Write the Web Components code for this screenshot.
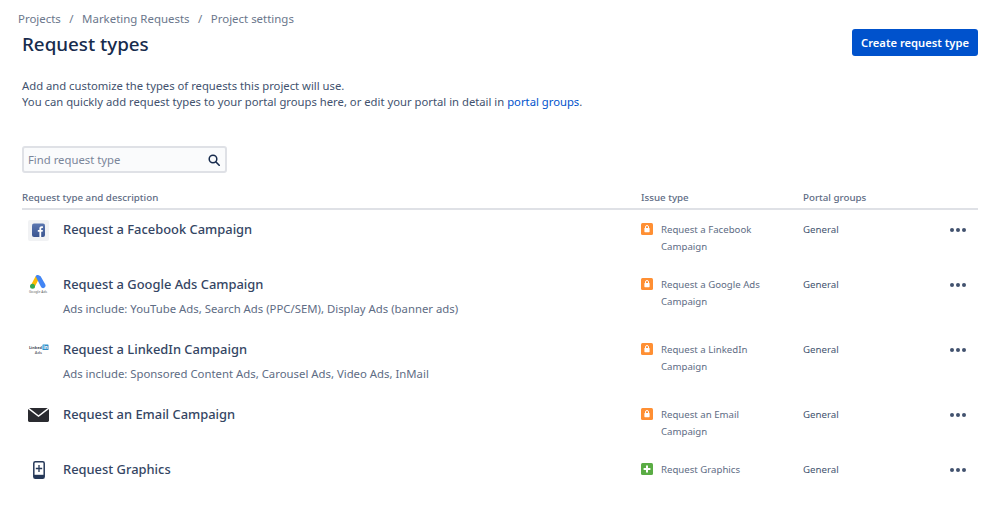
<!DOCTYPE html>
<html>
<head>
<meta charset="utf-8">
<title>Request types</title>
<style>
  html, body { margin: 0; background: #fff; }
  body { font-family: "Noto Sans", "Open Sans", sans-serif; color: #172b4d; }
</style>
</head>
<body>
<settings-page>
  <page-header></page-header>
  <request-table>
    <request-row name="Request a Facebook Campaign" issue="Request a Facebook Campaign" icon="facebook"></request-row>
    <request-row name="Request a Google Ads Campaign" issue="Request a Google Ads Campaign" icon="google" desc="Ads include: YouTube Ads, Search Ads (PPC/SEM), Display Ads (banner ads)"></request-row>
    <request-row name="Request a LinkedIn Campaign" issue="Request a LinkedIn Campaign" icon="linkedin" desc="Ads include: Sponsored Content Ads, Carousel Ads, Video Ads, InMail"></request-row>
    <request-row name="Request an Email Campaign" issue="Request an Email Campaign" icon="email"></request-row>
    <request-row name="Request Graphics" issue="Request Graphics" icon="graphics" kind="plus"></request-row>
  </request-table>
</settings-page>

<script>
// every icon is drawn in the same 21x22 box, centred on the row's first line
const ICONS = {
  facebook: `
    <svg width="21" height="21" viewBox="0 0 21 21">
      <defs><linearGradient id="fb" x1="0" y1="0" x2="0" y2="1"><stop offset="0" stop-color="#5a76b0"/><stop offset="1" stop-color="#3b5590"/></linearGradient></defs>
      <rect width="21" height="21" rx="2" fill="#f1f2f4"/>
      <rect x="4" y="3.5" width="13" height="13.5" rx="2" fill="url(#fb)"/>
      <path d="M11.4 17v-5.2H9.8V9.9h1.6V8.6c0-1.6.9-2.4 2.3-2.4h1.2v1.8h-.8c-.7 0-.9.4-.9 1v.9h1.7l-.3 1.9h-1.4V17z" fill="#fff"/>
    </svg>`,
  google: `
    <svg width="21" height="22" viewBox="0 0 21 22">
      <path d="M7.6 2.2 2.4 12.2l3.6 2 5.1-9.6z" fill="#fbbc04"/>
      <path d="M10.6 1.2c-1.4-.3-2.5.3-3 1l5.2 10.4c.8 1.5 2.3 1.9 3.5 1.2 1.3-.7 1.6-2.2.9-3.5l-4.6-8C12.1 1.7 11.5 1.4 10.6 1.2z" fill="#4285f4"/>
      <circle cx="4.5" cy="12.2" r="2.5" fill="#34a853"/>
      <text x="10" y="18.8" text-anchor="middle" font-family="Noto Sans, sans-serif" font-size="3.4" fill="#5f6368">Google Ads</text>
    </svg>`,
  linkedin: `
    <svg width="21" height="22" viewBox="0 0 21 22">
      <text x="14" y="10" text-anchor="end" font-family="Noto Sans, sans-serif" font-size="3.9" font-weight="700" fill="#444b57">Linked</text>
      <rect x="14.5" y="5.5" width="6" height="5.5" rx=".6" fill="#2d8fc9"/>
      <text x="17.5" y="10.2" text-anchor="middle" font-family="Noto Sans, sans-serif" font-size="4.6" font-weight="700" fill="#fff">in</text>
      <text x="14" y="15.4" text-anchor="end" font-family="Noto Sans, sans-serif" font-size="4" font-weight="600" fill="#6b6f78">Ads</text>
    </svg>`,
  email: `
    <svg width="21" height="14" viewBox="0 0 21 14">
      <path d="M1.2 0h18.600L10.5 7.3z" fill="#2a2b30"/>
      <path d="M0 1v11.600C0 13.400.6 14 1.400 14h18.200c.8 0 1.400-.6 1.400-1.400V1L10.500 9.100z" fill="#2a2b30"/>
    </svg>`,
  graphics: `
    <svg width="12" height="18" viewBox="0 0 12 18">
      <rect x=".8" y=".8" width="10.400" height="16.400" rx="1.500" fill="none" stroke="#253858" stroke-width="1.500"/>
      <rect x="1" y="13.800" width="10" height="3.200" fill="#253858"/>
      <path d="M6 4v7M2.800 7.500h6.400" stroke="#253858" stroke-width="1.300"/>
    </svg>`,
}

class SettingsPage extends HTMLElement {
  constructor() {
    super()
    this.attachShadow({ mode: "open" }).innerHTML = `
      <style>
        :host { display: block; padding: 11px 21px 0 22px; }
      </style>
      <slot></slot>`
  }
}

class PageHeader extends HTMLElement {
  constructor() {
    super()
    this.attachShadow({ mode: "open" }).innerHTML = `
      <style>
        :host { display: block; }
        .crumbs { display: flex; gap: 8.5px; margin-left: -4px; font-size: 11.45px; line-height: 15px; color: #6b778c; }
        .top { display: flex; justify-content: space-between; align-items: flex-start; }
        h1 { margin: 2px 0 0; font-size: 18.8px; line-height: 32px; font-weight: 500; color: #172b4d; }
        button { margin-top: 3px; width: 126px; height: 27px; padding: 0; border: 0; border-radius: 3px; background: #0052cc; color: #fff;
                 font: 600 11.2px "Noto Sans", sans-serif; }
        p { margin: 18px 0 0; font-size: 11.28px; line-height: 16px; color: #42526e; }
        a { color: #0052cc; text-decoration: none; }
        .search { box-sizing: border-box; margin-top: 36px; width: 205px; height: 27px; display: flex; align-items: center;
                  justify-content: space-between; padding: 0 5px 0 4px; border: 2px solid #dfe1e6; border-radius: 3px; background: #fafbfc;
                  font-size: 11.3px; color: #7a869a; }
      </style>
      <div class="crumbs"><span>Projects</span><span>/</span><span>Marketing Requests</span><span>/</span><span>Project settings</span></div>
      <div class="top">
        <h1>Request types</h1>
        <button>Create request type</button>
      </div>
      <p>Add and customize the types of requests this project will use.<br>
      You can quickly add request types to your portal groups here, or edit your portal in detail in <a href="#">portal groups</a>.</p>
      <div class="search"><span>Find request type</span>
        <svg width="12" height="12" viewBox="0 0 12 12"><circle cx="5" cy="5" r="3.8" fill="none" stroke="#172b4d" stroke-width="1.5"/><path d="M8 8l3.2 3.2" stroke="#172b4d" stroke-width="1.6" stroke-linecap="round"/></svg>
      </div>`
  }
}

class RequestTable extends HTMLElement {
  constructor() {
    super()
    this.attachShadow({ mode: "open" }).innerHTML = `
      <style>
        :host { display: block; margin-top: 18px; }
        .head { display: grid; grid-template-columns: 619px 162px 1fr; height: 17px; border-bottom: 2px solid #dfe1e6;
                font-size: 9.75px; line-height: 14px; font-weight: 500; color: #5e6c84; }
      </style>
      <div class="head"><span>Request type and description</span><span>Issue type</span><span>Portal groups</span></div>
      <slot></slot>`
  }
}

class RequestRow extends HTMLElement {
  connectedCallback() {
    const name = this.getAttribute("name")
    const desc = this.getAttribute("desc")
    const issue = this.getAttribute("issue")
    const plus = this.getAttribute("kind") === "plus"
    const badge = plus
      ? `<svg width="12" height="12" viewBox="0 0 12 12"><rect width="12" height="12" rx="1.5" fill="#5aac44"/><path d="M6 2.6v6.8M2.600 6h6.800" stroke="#fff" stroke-width="2"/></svg>`
      : `<svg width="12" height="12" viewBox="0 0 12 12"><rect width="12" height="12" rx="1.5" fill="#ff8f33"/><rect x="3.4" y="5" width="5.2" height="4.2" rx=".6" fill="#fff"/><path d="M4.5 5V4a1.5 1.5 0 0 1 3 0v1" fill="none" stroke="#fff" stroke-width="1"/></svg>`
    this.attachShadow({ mode: "open" }).innerHTML = `
      <style>
        :host { display: grid; grid-template-columns: 41px 578px 162px 1fr 28px; align-items: start; padding-top: 9px; height: ${desc ? 56 : 46}px; }
        .icon { width: 21px; height: 22px; margin-left: 6px; display: flex; align-items: center; justify-content: center; }
        .name { font-size: 12.9px; line-height: 20px; font-weight: 500; color: #344563; }
        .desc { margin-top: 7px; font-size: 11.35px; line-height: 16px; color: #5e6c84; }
        .issue { display: grid; grid-template-columns: 12px 1fr; column-gap: 8px; max-width: 130px; margin-top: 1.5px; font-size: 9.65px; line-height: 17px; color: #5e6c84; }
        .issue svg { margin-top: 2px; }
        .group { margin-top: 1.5px; font-size: 9.7px; line-height: 17px; color: #42526e; }
        .more { display: flex; gap: 2px; margin-top: 9px; }
        .more i { width: 4px; height: 4px; border-radius: 50%; background: #42526e; }
      </style>
      <div class="icon">${ICONS[this.getAttribute("icon")]}</div>
      <div><div class="name">${name}</div>${desc ? `<div class="desc">${desc}</div>` : ""}</div>
      <div class="issue">${badge}<span>${issue}</span></div>
      <div class="group">General</div>
      <div class="more"><i></i><i></i><i></i></div>`
  }
}

customElements.define("settings-page", SettingsPage)
customElements.define("page-header", PageHeader)
customElements.define("request-table", RequestTable)
customElements.define("request-row", RequestRow)
</script>
</body>
</html>
